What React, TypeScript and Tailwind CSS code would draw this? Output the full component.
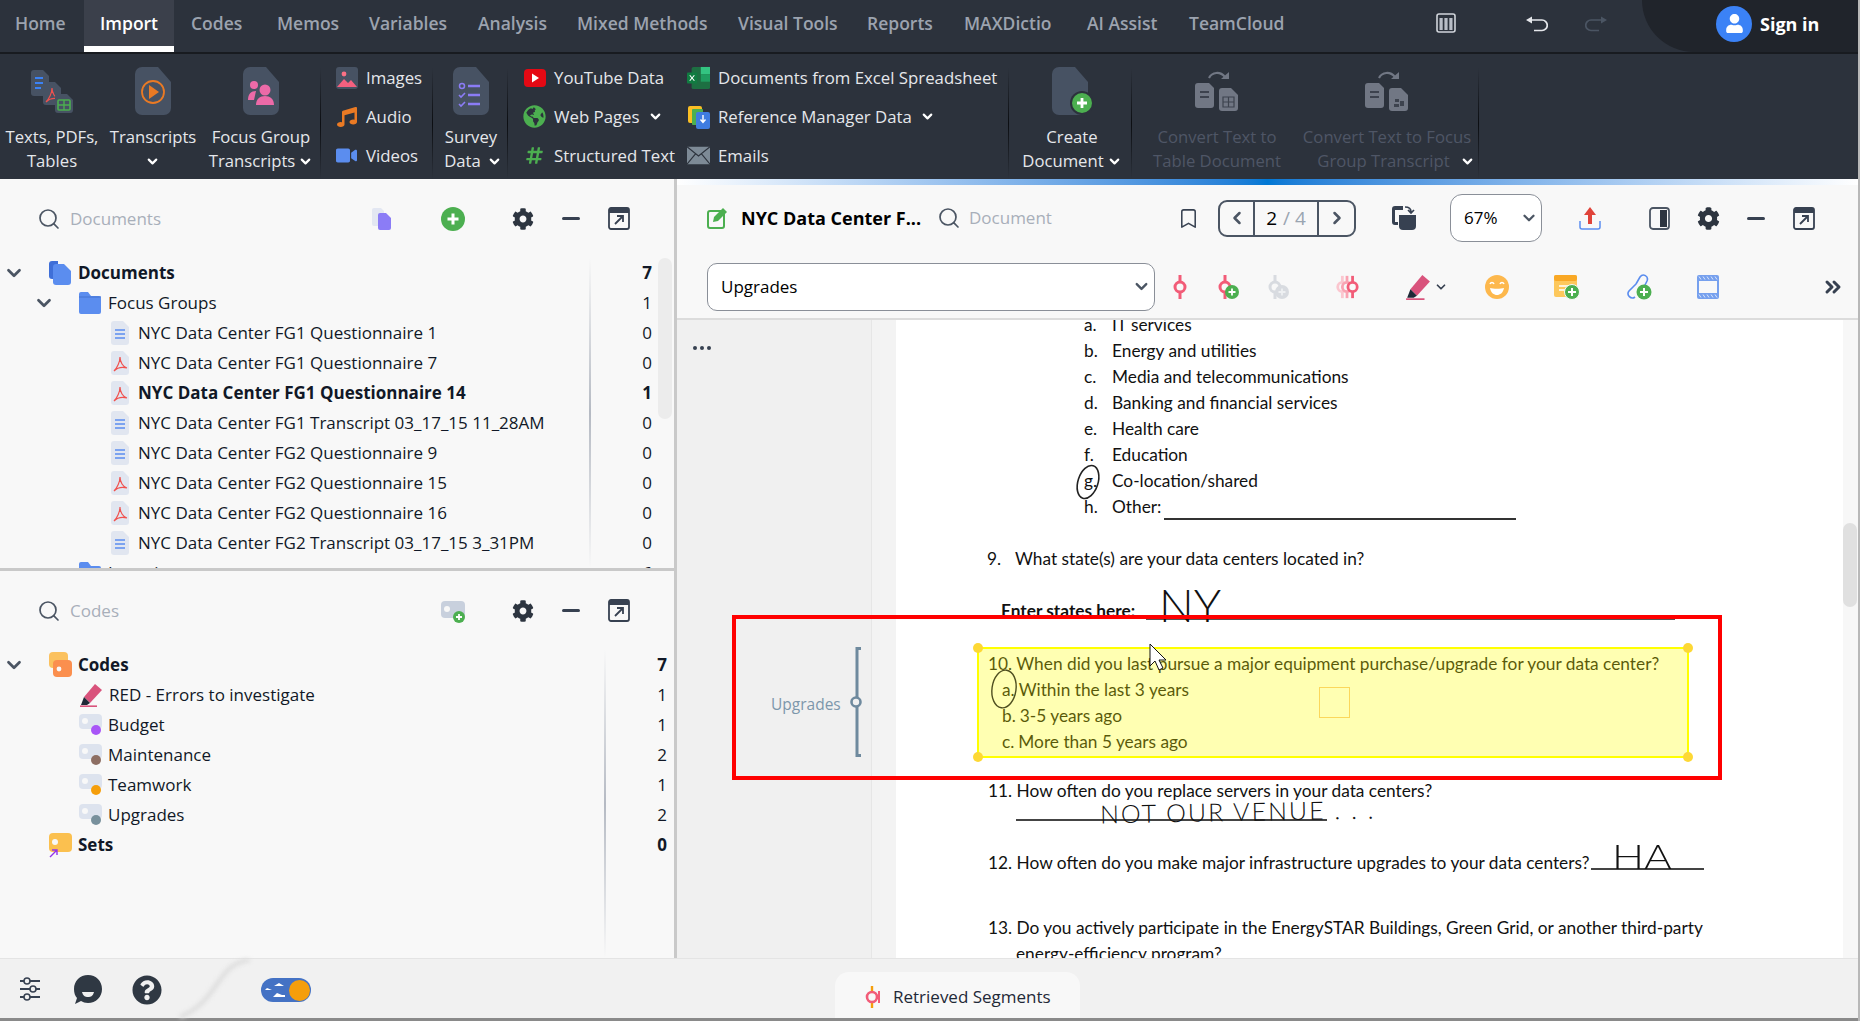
import { ChevronDown, ChevronLeft, ChevronRight, ChevronsRight, Search, Bookmark } from "lucide-react";
import { FaCog, FaMusic, FaVideo, FaGlobeAmericas, FaHashtag, FaQuestionCircle, FaUser } from "react-icons/fa";
import type { ReactNode } from "react";

const DOC = "M7 0H23L36 15V41a7 7 0 0 1-7 7H7a7 7 0 0 1-7-7V7a7 7 0 0 1 7-7z";

function DocShape({ children, fill = "#475263" }: { children?: ReactNode; fill?: string }) {
  return (
    <svg width="36" height="48" viewBox="0 0 36 48">
      <path d={DOC} fill={fill} />
      {children}
    </svg>
  );
}

function Pdf({ x = 0, y = 0 }: { x?: number; y?: number }) {
  return (
    <path
      d={`M${x + 2} ${y + 15}C${x + 5} ${y + 12} ${x + 8} ${y + 6} ${x + 8} ${y + 1}C${x + 8} ${y + 6} ${x + 11} ${y + 11} ${x + 15} ${y + 12}C${x + 11} ${y + 11} ${x + 6} ${y + 11} ${x + 2} ${y + 15}z`}
      fill="none"
      stroke="#f0524f"
      strokeWidth="1.2"
    />
  );
}

function TextsIcon() {
  return (
    <svg width="43" height="43" viewBox="0 0 43 43">
      <path d="M3 0h9l6 6v17a3 3 0 0 1-3 3H3a3 3 0 0 1-3-3V3a3 3 0 0 1 3-3z" fill="#475263" />
      <path d="M4 8h8M4 13h8M4 18h6" stroke="#3b82f6" strokeWidth="1.8" />
      <path d="M15 12h9l6 6v14a3 3 0 0 1-3 3H15a3 3 0 0 1-3-3V15a3 3 0 0 1 3-3z" fill="#475263" />
      <Pdf x={13} y={17} />
      <path d="M27 24h9l6 6v10a3 3 0 0 1-3 3H27a3 3 0 0 1-3-3V27a3 3 0 0 1 3-3z" fill="#475263" />
      <rect x="27" y="30" width="12" height="10" rx="1" fill="none" stroke="#4caf50" strokeWidth="1.6" />
      <path d="M33 30v10M27 35h12" stroke="#4caf50" strokeWidth="1.4" />
    </svg>
  );
}

function TranscriptIcon() {
  return (
    <DocShape>
      <circle cx="18" cy="25" r="11" fill="none" stroke="#ea7a24" strokeWidth="1.8" />
      <path d="M14 18l10 7-10 7z" fill="#ea7a24" />
    </DocShape>
  );
}

function FocusIcon() {
  return (
    <DocShape>
      <circle cx="11" cy="18" r="4" fill="#ec6aa8" />
      <circle cx="22" cy="23" r="5.5" fill="#ec6aa8" />
      <path d="M5 33c0-6 3-9 8-9l-2 9z" fill="#ec6aa8" />
      <path d="M13 38c0-6 4-9 9-9s9 3 9 9z" fill="#ec6aa8" />
    </DocShape>
  );
}

function SurveyIcon() {
  return (
    <DocShape>
      <circle cx="9" cy="19" r="2.5" fill="none" stroke="#8b7cf6" strokeWidth="1.5" />
      <path d="M15 19h12M15 28h12M15 37h12" stroke="#8b7cf6" strokeWidth="2.6" />
      <path d="M6 28l2 2 4-4M6 37l2 2 4-4" fill="none" stroke="#8b7cf6" strokeWidth="1.6" />
    </DocShape>
  );
}

function CreateIcon() {
  return (
    <svg width="44" height="48" viewBox="0 0 44 48" className="ml-[4px]">
      <path d={DOC} fill="#475263" />
      <circle cx="30" cy="36" r="12" fill="#2c323c" />
      <circle cx="30" cy="36" r="10" fill="#4caf50" />
      <path d="M30 31v10M25 36h10" stroke="#fff" strokeWidth="2.8" />
    </svg>
  );
}

function ConvertIcon({ focus }: { focus?: boolean }) {
  return (
    <svg width="44" height="40" viewBox="0 0 44 40">
      <path d="M14 7C17 1 25 0 30 6" fill="none" stroke="#717784" strokeWidth="2.2" />
      <path d="M26 8h8V1z" fill="#717784" />
      <path d="M3 12h11l5 5v17a3 3 0 0 1-3 3H3a3 3 0 0 1-3-3V15a3 3 0 0 1 3-3z" fill="#717784" />
      <path d="M5 21h9M5 26h9" stroke="#2c323c" strokeWidth="1.5" />
      <path d="M27 17h9l7 7v13a3 3 0 0 1-3 3H27a3 3 0 0 1-3-3V20a3 3 0 0 1 3-3z" fill="#717784" />
      {focus ? (
        <path d="M30 28h4v3h-4zM35 30h4v5h-4zM29 33h5v3h-5z" fill="#3d434e" />
      ) : (
        <path d="M28 26h11v10H28zM33.5 26v10M28 31h11" fill="none" stroke="#3d434e" strokeWidth="1.2" />
      )}
    </svg>
  );
}

function ImagesIcon() {
  return (
    <svg width="22" height="22" viewBox="0 0 22 22">
      <rect width="22" height="22" rx="3" fill="#475263" />
      <circle cx="8" cy="7" r="2.4" fill="#fb7185" />
      <path d="M1 20l7-8 4 4 3-3 6 7z" fill="#f4607f" />
    </svg>
  );
}

function ExcelIcon() {
  return (
    <svg width="25" height="24" viewBox="0 0 25 24">
      <rect x="5" y="0" width="20" height="24" rx="2" fill="#1d6f42" />
      <rect x="15" y="0" width="10" height="8" fill="#33c481" />
      <rect x="15" y="8" width="10" height="8" fill="#1f9d60" />
      <rect x="0" y="6" width="11" height="12" rx="1" fill="#107c41" />
      <path d="M3 9l5 6M8 9l-5 6" stroke="#fff" strokeWidth="1.2" />
    </svg>
  );
}

function RefManagerIcon() {
  return (
    <svg width="22" height="24" viewBox="0 0 22 24">
      <rect x="0" y="1" width="14" height="17" rx="2" fill="#fbbf24" />
      <rect x="4" y="4" width="11" height="16" rx="1" fill="#4caf50" />
      <rect x="8" y="7" width="14" height="17" rx="2" fill="#3f7ce0" />
      <path d="M15 10v7M12.5 14.5l2.5 3 2.5-3" fill="none" stroke="#fff" strokeWidth="1.4" />
    </svg>
  );
}

function EmailIcon() {
  return (
    <svg width="25" height="19" viewBox="0 0 25 19">
      <rect width="25" height="19" fill="#7d8a96" />
      <path d="M0 0l12.5 10L25 0M0 19l9-11M25 19l-9-11" fill="none" stroke="#2c323c" strokeWidth="1.2" />
    </svg>
  );
}

function RibbonSep() {
  return <div className="w-px self-stretch mt-[14px] bg-linear-to-b from-[#2c323c] via-[#0c0e12] to-[#2c323c]" />;
}

function BigButton({ icon, lines, width, chevron, disabled, shift }: { icon: ReactNode; lines: string[]; width: string; chevron?: boolean; disabled?: boolean; shift?: string }) {
  const color = disabled ? "text-[#4f5666]" : "text-[#e5e7eb]";
  return (
    <div className={`flex flex-col items-center ${width}`}>
      <div className="h-[60px] mt-[7px] flex items-center justify-center">{icon}</div>
      <div className={`mt-[4px] text-[16.7px] leading-[24px] text-center whitespace-nowrap ${color}`}>
        <div>{lines[0]}</div>
        <div className={`flex items-center justify-center h-[24px] ${shift ?? "gap-[3px]"}`}>
          {lines[1] && <span>{lines[1]}</span>}
          {chevron && <ChevronDown size={15} strokeWidth={3.5} className="text-white" />}
        </div>
      </div>
    </div>
  );
}

function SmallButton({ icon, label, chevron }: { icon: ReactNode; label: string; chevron?: boolean }) {
  return (
    <div className="h-[39px] flex items-center text-[16.8px] text-[#e5e7eb] whitespace-nowrap">
      <div className="w-[31px] flex items-center justify-center pr-[8px]">{icon}</div>
      <span>{label}</span>
      {chevron && <ChevronDown size={15} strokeWidth={3.5} className="ml-[8px] text-white" />}
    </div>
  );
}

const TABS = [
  { label: "Home", cls: "w-[84px] pl-[15px] pb-[6px]" },
  { label: "Import", cls: "w-[90px] justify-center bg-[#3b404b] border-b-[6px] border-white text-white" },
  { label: "Codes", cls: "w-[86px] pl-[17px] pb-[6px]" },
  { label: "Memos", cls: "w-[94px] pl-[17px] pb-[6px]" },
  { label: "Variables", cls: "w-[108px] pl-[15px] pb-[6px]" },
  { label: "Analysis", cls: "w-[99px] pl-[16px] pb-[6px]" },
  { label: "Mixed Methods", cls: "w-[161px] pl-[16px] pb-[6px]" },
  { label: "Visual Tools", cls: "w-[130px] pl-[16px] pb-[6px]" },
  { label: "Reports", cls: "w-[97px] pl-[15px] pb-[6px]" },
  { label: "MAXDictio", cls: "w-[122px] pl-[15px] pb-[6px]" },
  { label: "AI Assist", cls: "w-[103px] pl-[16px] pb-[6px]" },
  { label: "TeamCloud", cls: "w-[110px] pl-[15px] pb-[6px]" },
];

function TopBar() {
  return (
    <div className="h-[54px] flex bg-[#2c323c] border-b-2 border-[#181b20] text-[#9ca3af] font-semibold text-[17.5px]">
      {TABS.map((t) => (
        <div key={t.label} className={`flex items-center whitespace-nowrap h-[52px] ${t.cls}`}>
          {t.label}
        </div>
      ))}
      <svg width="20" height="20" viewBox="0 0 20 20" className="ml-[152px] mt-[13px]">
        <rect x="1" y="1" width="18" height="18" rx="2" fill="none" stroke="#d1d5db" strokeWidth="1.6" />
        <path d="M3.5 5h3.2v12H3.5zM8.4 5h3.2v12H8.4zM13.3 5h3.2v12h-3.2z" fill="#b9bec7" />
      </svg>
      <svg width="22" height="16" viewBox="0 0 22 16" className="ml-[70px] mt-[16px]">
        <path d="M5 4h11a5 5 0 0 1 0 10.5H8" fill="none" stroke="#e5e7eb" strokeWidth="1.7" />
        <path d="M0 4l6-3.5v7z" fill="#e5e7eb" />
      </svg>
      <svg width="22" height="16" viewBox="0 0 22 16" className="ml-[37px] mt-[16px]">
        <path d="M17 4H6a5 5 0 0 0 0 10.5h8" fill="none" stroke="#4b5563" strokeWidth="1.7" />
        <path d="M22 4l-6-3.5v7z" fill="#4b5563" />
      </svg>
      <div className="ml-[35px] w-[216px] h-[52px] bg-[#20242b] rounded-bl-[52px] flex items-center">
        <div className="ml-[74px] w-[36px] h-[36px] rounded-full bg-[#3b82f6] flex items-center justify-center -mt-[5px]">
          <FaUser size={19} className="text-white" />
        </div>
        <span className="ml-[8px] -mt-[3px] text-white font-bold text-[18px]">Sign in</span>
      </div>
    </div>
  );
}

function Ribbon() {
  return (
    <div className="h-[125px] flex bg-[#2c323c] overflow-hidden">
      <BigButton width="w-[104px]" icon={<TextsIcon />} lines={["Texts, PDFs,", "Tables"]} />
      <BigButton width="w-[98px]" icon={<TranscriptIcon />} lines={["Transcripts", ""]} chevron />
      <BigButton width="w-[118px]" icon={<FocusIcon />} lines={["Focus Group", "Transcripts"]} chevron />
      <RibbonSep />
      <div className="w-[111px] pl-[14px] pt-[4px]">
        <SmallButton icon={<ImagesIcon />} label="Images" />
        <SmallButton icon={<FaMusic size={20} className="text-[#ea7a24]" />} label="Audio" />
        <SmallButton icon={<FaVideo size={21} className="text-[#5b8def]" />} label="Videos" />
      </div>
      <RibbonSep />
      <BigButton width="w-[74px] pl-[2px]" icon={<SurveyIcon />} lines={["Survey", "Data"]} chevron shift="gap-[6px] translate-x-[2px]" />
      <RibbonSep />
      <div className="w-[179px] pl-[15px] pt-[4px]">
        <SmallButton
          icon={
            <svg width="22" height="18" viewBox="0 0 22 18">
              <rect width="22" height="18" rx="4" fill="#e50914" />
              <path d="M8 4.5l7 4.5-7 4.5z" fill="#fff" />
            </svg>
          }
          label="YouTube Data"
        />
        <SmallButton icon={<FaGlobeAmericas size={23} className="text-[#4caf50]" />} label="Web Pages" chevron />
        <SmallButton icon={<FaHashtag size={19} className="text-[#4caf50]" />} label="Structured Text" />
      </div>
      <div className="w-[321px] pt-[4px]">
        <SmallButton icon={<ExcelIcon />} label="Documents from Excel Spreadsheet" />
        <SmallButton icon={<RefManagerIcon />} label="Reference Manager Data" chevron />
        <SmallButton icon={<EmailIcon />} label="Emails" />
      </div>
      <RibbonSep />
      <BigButton width="w-[122px] pl-[4px]" icon={<CreateIcon />} lines={["Create", "Document"]} chevron />
      <RibbonSep />
      <BigButton width="w-[170px]" disabled icon={<ConvertIcon />} lines={["Convert Text to", "Table Document"]} />
      <BigButton width="w-[170px] mr-[6px]" disabled icon={<ConvertIcon focus />} lines={["Convert Text to Focus", "Group Transcript"]} chevron shift="gap-[10px] translate-x-[9px]" />
      <RibbonSep />
    </div>
  );
}

function Expand() {
  return (
    <svg width="22" height="23" viewBox="0 0 22 23">
      <rect x="1" y="1" width="20" height="21" rx="2" fill="none" stroke="#374151" strokeWidth="1.8" />
      <rect x="1" y="1" width="20" height="5" fill="#374151" />
      <path d="M7 17l8-8M9 9h6v6" fill="none" stroke="#374151" strokeWidth="1.8" />
    </svg>
  );
}

function Minus() {
  return <div className="w-[18px] h-[3px] rounded bg-[#374151]" />;
}

function PlusCircle({ size }: { size: number }) {
  return (
    <svg width={size} height={size} viewBox="0 0 24 24">
      <circle cx="12" cy="12" r="12" fill="#4caf50" />
      <path d="M12 6.5v11M6.5 12h11" stroke="#fff" strokeWidth="3" />
    </svg>
  );
}

function CodeTag({ color }: { color: string }) {
  return (
    <svg width="23" height="24" viewBox="0 0 23 24">
      <rect x="0" y="1" width="23" height="15" rx="4" fill="#dde3ee" />
      <circle cx="6" cy="8" r="3" fill="#f8f8f8" />
      <circle cx="17" cy="17" r="5" fill={color} />
    </svg>
  );
}

function Marker({ size = 24 }: { size?: number }) {
  return (
    <svg width={size} height={size} viewBox="0 0 24 24">
      <path d="M16 1l7 6-12 13-6-6z" fill="#d9537c" />
      <path d="M5 14l6 6-3 2H2z" fill="#1f2937" />
      <rect x="1" y="22.4" width="17" height="1.6" fill="#d9537c" />
    </svg>
  );
}

function TreeFile({ pdf }: { pdf?: boolean }) {
  return (
    <svg width="18" height="24" viewBox="0 0 18 24">
      <path d="M3 0h9l6 6v15a3 3 0 0 1-3 3H3a3 3 0 0 1-3-3V3a3 3 0 0 1 3-3z" fill="#e1e6f0" />
      {pdf ? <Pdf x={1} y={5} /> : <path d="M4 9h10M4 13h10M4 17h10" stroke="#5b8def" strokeWidth="1.7" />}
    </svg>
  );
}

function TreeRow({ indent, chevron, icon, label, count, bold, width, textLeft }: { indent: string; chevron?: string; icon: ReactNode; label: string; count: number; bold?: boolean; width: string; textLeft: string }) {
  return (
    <div className={`h-[30px] flex items-center text-[17px] text-[#111827] whitespace-nowrap ${width} ${bold ? "font-bold" : ""}`}>
      {chevron && <ChevronDown size={22} strokeWidth={3} className={`absolute text-[#4b5563] ${chevron}`} />}
      <div className={indent}>{icon}</div>
      <span className={textLeft}>{label}</span>
      <span className="ml-auto">{count}</span>
    </div>
  );
}

const DOC_ROWS = [
  { label: "NYC Data Center FG1 Questionnaire 1", count: 0 },
  { label: "NYC Data Center FG1 Questionnaire 7", count: 0, pdf: true },
  { label: "NYC Data Center FG1 Questionnaire 14", count: 1, pdf: true, bold: true },
  { label: "NYC Data Center FG1 Transcript 03_17_15 11_28AM", count: 0 },
  { label: "NYC Data Center FG2 Questionnaire 9", count: 0 },
  { label: "NYC Data Center FG2 Questionnaire 15", count: 0, pdf: true },
  { label: "NYC Data Center FG2 Questionnaire 16", count: 0, pdf: true },
  { label: "NYC Data Center FG2 Transcript 03_17_15 3_31PM", count: 0 },
];

const CODE_ROWS = [
  { label: "Budget", count: 1, color: "#a855f7" },
  { label: "Maintenance", count: 2, color: "#8d6e63" },
  { label: "Teamwork", count: 1, color: "#f59e0b" },
  { label: "Upgrades", count: 2, color: "#78909c" },
];

function PaneHeader({ placeholder, plus, textWidth, first }: { placeholder: string; plus: ReactNode; textWidth: string; first?: ReactNode }) {
  return (
    <div className="h-[79px] flex items-center pl-[37px] shrink-0">
      <Search size={24} strokeWidth={1.7} className="text-[#4b5563]" />
      <span className={`ml-[9px] text-[17px] text-[#a8afba] ${textWidth}`}>{placeholder}</span>
      {first}
      {plus}
      <FaCog size={22} className="ml-[47px] text-[#2d3540]" />
      <div className="ml-[28px]">
        <Minus />
      </div>
      <div className="ml-[28px]">
        <Expand />
      </div>
    </div>
  );
}

function DocumentsPane() {
  return (
    <div className="h-[389px] flex flex-col overflow-hidden">
      <PaneHeader
        placeholder="Documents"
        textWidth="w-[302px]"
        first={
          <svg width="19" height="22" viewBox="0 0 19 22">
            <path d="M2 0h7l3 3v15H2a2 2 0 0 1-2-2V2a2 2 0 0 1 2-2z" fill="#e3e7f2" />
            <path d="M8 5h6l5 5v10a2 2 0 0 1-2 2H8a2 2 0 0 1-2-2V7a2 2 0 0 1 2-2z" fill="#8b7cf6" />
          </svg>
        }
        plus={
          <div className="ml-[50px]">
            <PlusCircle size={24} />
          </div>
        }
      />
      <div className="relative flex-1 overflow-hidden">
        <div className="absolute left-[589px] top-0 bottom-0 w-[2px] bg-linear-to-b from-[#f8f8f8] via-[#b5bac3] to-[#f8f8f8]" />
        <div className="absolute left-[658px] top-0 w-[14px] h-[161px] rounded-full bg-[#ececec]" />
        <TreeRow
          width="w-[652px]"
          indent="ml-[49px]"
          chevron="left-[3px]"
          textLeft="ml-[7px]"
          bold
          label="Documents"
          count={7}
          icon={
            <svg width="22" height="24" viewBox="0 0 22 24">
              <path d="M3 0h6v18H3a3 3 0 0 1-3-3V3a3 3 0 0 1 3-3z" fill="#3f6fd8" />
              <path d="M7 3h8l7 7v11a3 3 0 0 1-3 3H7a3 3 0 0 1-3-3V6a3 3 0 0 1 3-3z" fill="#5b8def" />
            </svg>
          }
        />
        <TreeRow
          width="w-[652px]"
          indent="ml-[79px]"
          chevron="left-[33px]"
          textLeft="ml-[7px]"
          label="Focus Groups"
          count={1}
          icon={
            <svg width="22" height="22" viewBox="0 0 22 22">
              <path d="M2 0h7l3 4h8a2 2 0 0 1 2 2v14a2 2 0 0 1-2 2H2a2 2 0 0 1-2-2V2a2 2 0 0 1 2-2z" fill="#5b8def" />
              <path d="M0 5h22" stroke="#4472d0" strokeWidth="1" />
            </svg>
          }
        />
        {DOC_ROWS.map((r) => (
          <TreeRow key={r.label} width="w-[652px]" indent="ml-[111px]" textLeft="ml-[9px]" label={r.label} count={r.count} bold={r.bold} icon={<TreeFile pdf={r.pdf} />} />
        ))}
        <TreeRow
          width="w-[652px]"
          indent="ml-[79px]"
          textLeft="ml-[7px]"
          label="Interviews"
          count={6}
          icon={
            <svg width="22" height="22" viewBox="0 0 22 22">
              <path d="M2 0h7l3 4h8a2 2 0 0 1 2 2v14a2 2 0 0 1-2 2H2a2 2 0 0 1-2-2V2a2 2 0 0 1 2-2z" fill="#5b8def" />
            </svg>
          }
        />
      </div>
    </div>
  );
}

function CodesPane() {
  return (
    <div className="flex-1 flex flex-col overflow-hidden">
      <PaneHeader
        placeholder="Codes"
        textWidth="w-[371px]"
        plus={
          <svg width="24" height="24" viewBox="0 0 24 24">
            <rect x="0" y="2" width="24" height="17" rx="4" fill="#c8d0dd" />
            <circle cx="6" cy="10" r="3" fill="#f8f8f8" />
            <circle cx="18" cy="18" r="6" fill="#4caf50" />
            <path d="M18 15v6M15 18h6" stroke="#fff" strokeWidth="1.8" />
          </svg>
        }
      />
      <div className="relative flex-1">
        <div className="absolute left-[604px] top-0 bottom-0 w-[2px] bg-linear-to-b from-[#f8f8f8] via-[#b5bac3] to-[#f8f8f8]" />
        <TreeRow
          width="w-[667px]"
          indent="ml-[49px]"
          chevron="left-[3px]"
          textLeft="ml-[6px]"
          bold
          label="Codes"
          count={7}
          icon={
            <svg width="23" height="26" viewBox="0 0 23 26">
              <rect x="0" y="0" width="19" height="16" rx="4" fill="#fbc15e" />
              <rect x="4" y="8" width="19" height="17" rx="4" fill="#fb8f4e" />
              <circle cx="10" cy="17" r="2.4" fill="#f8f8f8" />
            </svg>
          }
        />
        <TreeRow width="w-[667px]" indent="ml-[79px]" textLeft="ml-[6px]" label="RED - Errors to investigate" count={1} icon={<Marker />} />
        {CODE_ROWS.map((r) => (
          <TreeRow key={r.label} width="w-[667px]" indent="ml-[79px]" textLeft="ml-[6px]" label={r.label} count={r.count} icon={<CodeTag color={r.color} />} />
        ))}
        <TreeRow
          width="w-[667px]"
          indent="ml-[49px]"
          textLeft="ml-[6px]"
          bold
          label="Sets"
          count={0}
          icon={
            <svg width="23" height="25" viewBox="0 0 23 25">
              <rect x="0" y="0" width="23" height="19" rx="4" fill="#fbc04f" />
              <circle cx="6" cy="9" r="3" fill="#f8f8f8" />
              <path d="M1 24l7-7M3 17h5v5" fill="none" stroke="#9333ea" strokeWidth="1.4" />
            </svg>
          }
        />
      </div>
    </div>
  );
}

function DocHeader() {
  return (
    <div className="h-[66px] flex items-center pl-[30px] shrink-0">
      <svg width="20" height="21" viewBox="0 0 20 21">
        <rect x="1" y="3" width="16" height="17" rx="2" fill="none" stroke="#4caf50" strokeWidth="2" />
        <path d="M16 0l4 4-9 9-5 1 1-5z" fill="#4caf50" />
      </svg>
      <span className="ml-[14px] w-[182px] text-[18px] font-bold text-black whitespace-nowrap">NYC Data Center F...</span>
      <Search size={24} strokeWidth={1.7} className="ml-[14px] text-[#4b5563]" />
      <span className="ml-[8px] w-[84px] text-[17px] text-[#a8afba]">Document</span>
      <Bookmark size={23} strokeWidth={1.6} className="ml-[124px] text-[#374151]" />
      <div className="ml-[18px] w-[138px] h-[37px] flex items-center border-2 border-[#4b5563] rounded-[9px] text-[19px]">
        <div className="w-[35px] h-full flex items-center justify-center border-r-2 border-[#4b5563]">
          <ChevronLeft size={20} strokeWidth={3} className="text-[#4b5563]" />
        </div>
        <div className="flex-1 h-full flex items-center justify-center gap-[6px] border-r-2 border-[#4b5563] font-medium text-black">
          2 <span className="text-[#9aa5b1]">/ 4</span>
        </div>
        <div className="w-[35px] flex items-center justify-center">
          <ChevronRight size={20} strokeWidth={3} className="text-[#4b5563]" />
        </div>
      </div>
      <svg width="24" height="24" viewBox="0 0 24 24" className="ml-[36px]">
        <path d="M3 0h8v4H3v12h3v3H3a3 3 0 0 1-3-3V3a3 3 0 0 1 3-3z" fill="#374151" />
        <path d="M7 9h17v11a4 4 0 0 1-4 4H11a4 4 0 0 1-4-4z" fill="#374151" />
        <path d="M13 1c4 0 6 2 6 5M16 4l3 3 3-3" fill="none" stroke="#374151" strokeWidth="1.7" />
      </svg>
      <div className="ml-[34px] w-[92px] h-[48px] bg-white border border-[#8a8f98] rounded-[12px] flex items-center pl-[13px] text-[17px] text-black">
        67%
        <ChevronDown size={18} strokeWidth={3} className="ml-[22px] text-[#4b5563]" />
      </div>
      <svg width="22" height="23" viewBox="0 0 22 23" className="ml-[37px]">
        <path d="M11 0l6 8h-4v9H9V8H5z" fill="#e0433a" />
        <path d="M1 14v6a2 2 0 0 0 2 2h16a2 2 0 0 0 2-2v-6" fill="none" stroke="#5b8def" strokeWidth="1.5" />
      </svg>
      <svg width="21" height="23" viewBox="0 0 21 23" className="ml-[48px]">
        <rect x="1" y="1" width="19" height="21" rx="3" fill="none" stroke="#4b5563" strokeWidth="1.8" />
        <rect x="11" y="3" width="7" height="17" fill="#2d3540" />
      </svg>
      <FaCog size={23} className="ml-[27px] text-[#2d3540]" />
      <div className="ml-[27px]">
        <Minus />
      </div>
      <div className="ml-[28px]">
        <Expand />
      </div>
    </div>
  );
}

function SegPin({ color }: { color: string }) {
  return (
    <g>
      <path d="M8 0v24" stroke={color} strokeWidth="3" />
      <circle cx="8" cy="12" r="5" fill="#f8f8f8" stroke={color} strokeWidth="3" />
    </g>
  );
}

function DocTools() {
  return (
    <div className="h-[69px] flex items-center pl-[30px] pt-[4px] shrink-0 border-b-2 border-[#dcdcdc]">
      <div className="w-[448px] h-[48px] bg-white border border-[#8a8f98] rounded-[10px] flex items-center pl-[13px] pr-[3px] text-[17px] text-black">
        Upgrades
        <ChevronDown size={19} strokeWidth={3} className="ml-auto text-[#4b5563]" />
      </div>
      <svg width="26" height="26" viewBox="-5 -1 26 26" className="ml-[12px]">
        <SegPin color="#f25c78" />
      </svg>
      <svg width="26" height="26" viewBox="-2 -1 26 26" className="ml-[22px]">
        <SegPin color="#f25c78" />
        <circle cx="15" cy="17" r="7" fill="#4caf50" />
        <path d="M15 13.5v7M11.5 17h7" stroke="#fff" strokeWidth="1.8" />
      </svg>
      <svg width="26" height="26" viewBox="-2 -1 26 26" className="ml-[24px]">
        <SegPin color="#d8dbe0" />
        <circle cx="15" cy="17" r="7" fill="#d8dbe0" />
        <path d="M15 13.5v7M11.5 17h7" stroke="#eef0f2" strokeWidth="1.8" />
      </svg>
      <svg width="26" height="26" viewBox="-1 -1 28 26" className="ml-[43px]">
        <SegPin color="#fbc6cf" />
        <g transform="translate(5 0)">
          <SegPin color="#f9a3b2" />
        </g>
        <g transform="translate(11 0)">
          <SegPin color="#f25c78" />
        </g>
      </svg>
      <div className="ml-[45px]">
        <Marker size={26} />
      </div>
      <ChevronDown size={14} strokeWidth={3} className="ml-[3px] text-[#374151]" />
      <svg width="26" height="26" viewBox="0 0 26 26" className="ml-[36px]">
        <circle cx="13" cy="13" r="12" fill="#fdb84d" />
        <path d="M6 10c1-2 3-2 4 0M16 10c1-2 3-2 4 0" fill="none" stroke="#fff" strokeWidth="1.6" />
        <path d="M6 14c3 1 11 1 14 0-1 5-4 7-7 7s-6-2-7-7z" fill="#fff" />
      </svg>
      <svg width="26" height="26" viewBox="0 0 26 26" className="ml-[44px]">
        <rect x="0" y="1" width="23" height="22" rx="2" fill="#fdc85c" />
        <rect x="0" y="1" width="23" height="6" rx="2" fill="#f9a825" />
        <path d="M5 12h10M5 16h6" stroke="#fff" strokeWidth="1.5" />
        <circle cx="18" cy="18" r="7.5" fill="#4caf50" stroke="#f8f8f8" strokeWidth="1" />
        <path d="M18 14v8M14 18h8" stroke="#fff" strokeWidth="2" />
      </svg>
      <svg width="26" height="26" viewBox="0 0 26 26" className="ml-[46px]">
        <path d="M10 10L3 17c-3 4 2 9 6 6M10 10l4-7c3-4 9-1 7 4l-3 6" fill="none" stroke="#5b8def" strokeWidth="1.6" />
        <circle cx="18" cy="18" r="7.5" fill="#4caf50" />
        <path d="M18 14v8M14 18h8" stroke="#fff" strokeWidth="2" />
      </svg>
      <svg width="22" height="24" viewBox="0 0 22 24" className="ml-[45px]">
        <rect x="0" y="0" width="22" height="24" rx="2" fill="#76a0ee" />
        <path d="M2 1.5l2 3M6 1.5l2 3M10 1.5l2 3M14 1.5l2 3M18 1.5l2 3M2 19.5l2 3M6 19.5l2 3M10 19.5l2 3M14 19.5l2 3M18 19.5l2 3" stroke="#dbe6fb" strokeWidth="1" />
        <rect x="2" y="6" width="18" height="12" fill="#f8f8f8" />
      </svg>
      <ChevronsRight size={24} strokeWidth={3} className="ml-[102px] text-[#374151]" />
    </div>
  );
}

function Item({ k, text }: { k: string; text: ReactNode }) {
  return (
    <div className="h-[26px] flex items-center pl-[188px]">
      <span className="w-[28px]">{k}</span>
      {text}
    </div>
  );
}

const LETTERS = [
  ["a.", "IT services"],
  ["b.", "Energy and utilities"],
  ["c.", "Media and telecommunications"],
  ["d.", "Banking and financial services"],
  ["e.", "Health care"],
  ["f.", "Education"],
  ["g.", "Co-location/shared"],
];

function Handwriting({ children, cls }: { children: string; cls: string }) {
  return <span className={`absolute font-['Lato',sans-serif] font-light leading-none text-[#111] ${cls}`}>{children}</span>;
}

function Page() {
  return (
    <div className="w-[947px] bg-white -mt-[8px] font-['Lato',sans-serif] text-[17.3px] text-[#111] whitespace-nowrap">
      {LETTERS.map(([k, t]) => (
        <Item key={k} k={k} text={<span>{t}</span>} />
      ))}
      <Item k="h." text={<span className="flex items-end">Other:<span className="ml-[3px] w-[352px] border-b-2 border-[#333]" /></span>} />
      <div className="h-[26px]" />
      <div className="h-[26px] flex items-center pl-[91px]">
        <span className="w-[28px]">9.</span>What state(s) are your data centers located in?
      </div>
      <div className="h-[26px] mt-[26px] relative flex items-center pl-[105px] font-bold">
        Enter states here:
        <span className="absolute left-[250px] top-[20px] w-[529px] border-b-2 border-[#555]" />
        <Handwriting cls="left-[263px] -top-[16px] text-[46px]">NY</Handwriting>
      </div>
      <div className="h-[26px] mt-[27px] flex items-center pl-[92px]">10. When did you last pursue a major equipment purchase/upgrade for your data center?</div>
      <div className="h-[26px] flex items-center pl-[106px]">a.<span className="ml-[4px]">Within the last 3 years</span></div>
      <div className="h-[26px] flex items-center pl-[106px]">b.<span className="ml-[4px]">3-5 years ago</span></div>
      <div className="h-[26px] flex items-center pl-[106px]">c.<span className="ml-[4px]">More than 5 years ago</span></div>
      <div className="h-[26px] mt-[23px] flex items-center pl-[92px]">11. How often do you replace servers in your data centers?</div>
      <div className="h-[20px] relative">
        <span className="absolute left-[120px] top-[15px] w-[311px] border-b-2 border-[#444]" />
        <Handwriting cls="left-[204px] -top-[5px] text-[25px] tracking-[2px] -rotate-1">NOT OUR VENUE . . .</Handwriting>
      </div>
      <div className="h-[26px] mt-[26px] relative flex items-center pl-[92px]">
        12. How often do you make major infrastructure upgrades to your data centers?
        <span className="absolute left-[695px] top-[18px] w-[113px] border-b-2 border-[#444]" />
        <Handwriting cls="left-[716px] -top-[11px] text-[34px] scale-x-125 origin-left">HA</Handwriting>
      </div>
      <div className="h-[26px] mt-[39px] flex items-center pl-[92px]">13. Do you actively participate in the EnergySTAR Buildings, Green Grid, or another third-party</div>
      <div className="h-[26px] flex items-center pl-[120px]">energy-efficiency program?</div>
    </div>
  );
}

function DocArea() {
  return (
    <div className="relative flex-1 flex overflow-hidden bg-[#f0f0f0]">
      <div className="w-[194px] pl-[16px] pt-[26px]">
        <div className="flex gap-[3px]">
          <span className="w-[4px] h-[4px] rounded-full bg-[#374151]" />
          <span className="w-[4px] h-[4px] rounded-full bg-[#374151]" />
          <span className="w-[4px] h-[4px] rounded-full bg-[#374151]" />
        </div>
      </div>
      <div className="w-[25px] bg-[#f3f3f3] border-l border-[#e6e6e6]" />
      <div className="overflow-hidden">
        <Page />
      </div>
      <div className="w-[15px] bg-[#f7f7f7]" />

      {/* coded segment marker in the gutter */}
      <span className="absolute left-[94px] top-[372px] text-[15.5px] leading-[24px] text-[#7d97ab]">Upgrades</span>
      <svg width="14" height="110" viewBox="0 0 14 110" className="absolute left-[172px] top-[327px]">
        <path d="M12 1.5H8V108.5H12" fill="none" stroke="#6f8a9e" strokeWidth="3" />
        <circle cx="7" cy="55" r="4.5" fill="#f0f0f0" stroke="#6f8a9e" strokeWidth="2.6" />
      </svg>

      {/* selection over the page */}
      <div className="absolute left-[300px] top-[327px] w-[712px] h-[111px] bg-[#ffff00]/30 border-2 border-[#ffff00]">
        <span className="absolute -left-[6px] -top-[6px] w-[10px] h-[10px] rounded-full bg-[#fdd835]" />
        <span className="absolute -right-[6px] -top-[6px] w-[10px] h-[10px] rounded-full bg-[#fdd835]" />
        <span className="absolute -left-[6px] -bottom-[6px] w-[10px] h-[10px] rounded-full bg-[#fdd835]" />
        <span className="absolute -right-[6px] -bottom-[6px] w-[10px] h-[10px] rounded-full bg-[#fdd835]" />
        <span className="absolute left-[340px] top-[38px] w-[31px] h-[31px] border border-[#fbd75b]" />
      </div>
      <div className="absolute left-[55px] top-[295px] w-[990px] h-[165px] border-[4px] border-[#ff0000]" />

      {/* pen circles and mouse cursor */}
      <svg width="36" height="42" viewBox="0 0 36 42" className="absolute left-[394px] top-[141px]">
        <ellipse cx="17" cy="21" rx="10" ry="17" transform="rotate(18 17 21)" fill="none" stroke="#222" strokeWidth="1.6" />
      </svg>
      <svg width="36" height="46" viewBox="0 0 36 46" className="absolute left-[309px] top-[346px]">
        <ellipse cx="18" cy="23" rx="12" ry="19" transform="rotate(8 18 23)" fill="none" stroke="#4f4f20" strokeWidth="1.4" />
      </svg>
      <svg width="18" height="28" viewBox="0 0 18 28" className="absolute left-[472px] top-[323px]">
        <path d="M1 1v22l5-5 4 9 4-2-4-8h7z" fill="#fff" stroke="#111" strokeWidth="1" />
      </svg>

      <div className="absolute right-[1px] top-[203px] w-[14px] h-[84px] rounded-full bg-[#e0e0e0]" />
    </div>
  );
}

function BottomBar() {
  return (
    <div className="relative h-[60px] shrink-0 flex items-end bg-[#f1f1f1] border-t border-[#e4e4e4]">
      <svg width="90" height="60" viewBox="0 0 90 60" className="absolute left-[170px] top-0 blur-[2px]">
        <path d="M80 1C46 4 50 42 10 58" fill="none" stroke="#dcdcdc" strokeWidth="4" />
      </svg>
      <div className="absolute left-[20px] top-[18px]">
        <svg width="20" height="24" viewBox="0 0 20 24">
          <path d="M0 4h20M0 12h20M0 20h20" stroke="#374151" strokeWidth="2" />
          <circle cx="7" cy="4" r="3" fill="#f0f0f0" stroke="#374151" strokeWidth="1.6" />
          <circle cx="13" cy="12" r="3" fill="#f0f0f0" stroke="#374151" strokeWidth="1.6" />
          <circle cx="7" cy="20" r="3" fill="#f0f0f0" stroke="#374151" strokeWidth="1.6" />
        </svg>
      </div>
      <div className="absolute left-[74px] top-[16px]">
        <svg width="28" height="30" viewBox="0 0 28 30">
          <path d="M14 0c8 0 14 6 14 14s-6 14-14 14c-3 0-5-1-7-2l-6 3 2-6C1 21 0 18 0 14 0 6 6 0 14 0z" fill="#2f3843" />
          <path d="M8 17h12c-1 4-3 5-6 5s-5-1-6-5z" fill="#f0f0f0" />
        </svg>
      </div>
      <FaQuestionCircle size={30} className="absolute left-[132px] top-[16px] text-[#2f3843]" />
      <div className="absolute left-[261px] top-[19px] w-[50px] h-[24px] rounded-full bg-[#4472c4] flex items-center justify-end pr-[1px]">
        <svg width="26" height="16" viewBox="0 0 26 16" className="absolute left-[4px] top-[4px]">
          <path d="M14 1l5 3H9zM2 6l5 2H0zM12 11l5 2h3v2H8z" fill="#fff" />
        </svg>
        <span className="w-[21px] h-[21px] rounded-full bg-[#f59e0b]" />
      </div>
      <div className="ml-[835px] w-[245px] h-[46px] bg-[#f8f8f8] rounded-t-[14px] flex items-center pl-[28px] pt-[3px] text-[17px] text-[#1f2937]">
        <svg width="22" height="24" viewBox="0 0 22 24">
          <path d="M9 1v22" stroke="#f59e0b" strokeWidth="2.4" />
          <circle cx="9" cy="12" r="5" fill="#f8f8f8" stroke="#f25c78" strokeWidth="2.6" />
          <path d="M16 6v12" stroke="#f25c78" strokeWidth="2" />
        </svg>
        <span className="ml-[8px]">Retrieved Segments</span>
      </div>
    </div>
  );
}

export default function App() {
  return (
    <div className="w-[1860px] h-[1021px] flex flex-col overflow-hidden bg-[#f8f8f8] border-r-2 border-[#b8b8b8] font-['Open_Sans','Noto_Sans',sans-serif]">
      <TopBar />
      <Ribbon />
      <div className="flex-1 flex min-h-0">
        <div className="w-[674px] flex flex-col shrink-0">
          <DocumentsPane />
          <div className="h-[3px] bg-[#c9c9c9] shrink-0" />
          <CodesPane />
        </div>
        <div className="w-[3px] bg-[#c9c9c9] shrink-0" />
        <div className="flex-1 flex flex-col min-w-0">
          <div className="h-[6px] shrink-0 bg-linear-to-r from-white via-[#0078d4] to-white" />
          <DocHeader />
          <DocTools />
          <DocArea />
        </div>
      </div>
      <BottomBar />
      <div className="h-[3px] bg-[#8a8a8a] shrink-0" />
    </div>
  );
}
